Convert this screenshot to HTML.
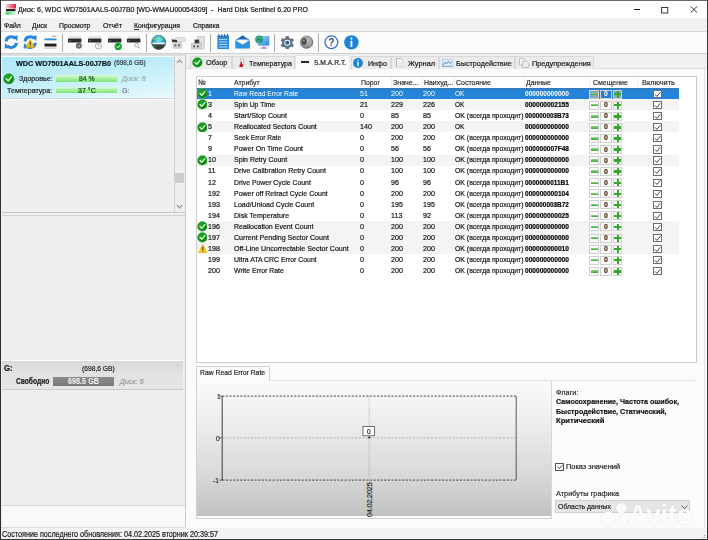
<!DOCTYPE html>
<html><head><meta charset="utf-8"><style>
html,body{margin:0;padding:0;}
body{width:708px;height:540px;overflow:hidden;position:relative;background:#f0f0f0;font-family:"Liberation Sans", sans-serif;}
.a{position:absolute;}
.t{white-space:pre;transform-origin:0 50%;-webkit-text-stroke:0.2px currentColor;}
</style></head><body>
<div class="a" style="left:0px;top:0px;width:708px;height:18.4px;background:#ffffff"></div>
<svg class="a" style="left:5px;top:3px" width="12" height="13" viewBox="0 0 12 13"><defs><linearGradient id="gr" x1="0" x2="1"><stop offset="0" stop-color="#f8d8dc"/><stop offset="1" stop-color="#e0203a"/></linearGradient><linearGradient id="gg" x1="0" x2="1"><stop offset="0" stop-color="#40d060"/><stop offset="1" stop-color="#c8f8d0"/></linearGradient></defs><rect x="0.5" y="1" width="10.5" height="4.5" fill="url(#gr)"/><rect x="1" y="6" width="9.5" height="2.3" fill="#202020"/><rect x="0.5" y="8.6" width="9.5" height="3.2" fill="url(#gg)"/></svg>
<div class="a t" style="left:18.00px;top:6.00px;font-size:8px;line-height:8px;font-weight:400;color:#101010;transform:scaleX(0.8730);">Диск: 6, WDC WD7501AALS-00J7B0 [WD-WMAU00054309]  -  Hard Disk Sentinel 6.20 PRO</div>
<div class="a" style="left:633.7px;top:9.2px;width:6.8px;height:0.9px;background:#1a1a1a"></div>
<svg class="a" style="left:660px;top:5.5px" width="9" height="8" viewBox="0 0 9 8"><rect x="1.6" y="1.4" width="6.2" height="5.6" fill="none" stroke="#1a1a1a" stroke-width="0.85"/></svg>
<svg class="a" style="left:689.5px;top:6.2px" width="8" height="7" viewBox="0 0 8 7"><path d="M0.5 0.3 L7.2 6.7 M7.2 0.3 L0.5 6.7" stroke="#222" stroke-width="0.9"/></svg>
<div class="a" style="left:0px;top:18.4px;width:708px;height:12.4px;background:#f0f0f0"></div>
<div class="a t" style="left:4.00px;top:21.65px;font-size:7.9px;line-height:7.9px;font-weight:400;color:#101010;transform:scaleX(0.8700);">Файл</div>
<div class="a t" style="left:32.00px;top:21.65px;font-size:7.9px;line-height:7.9px;font-weight:400;color:#101010;transform:scaleX(0.8700);">Диск</div>
<div class="a t" style="left:59.00px;top:21.65px;font-size:7.9px;line-height:7.9px;font-weight:400;color:#101010;transform:scaleX(0.8700);">Просмотр</div>
<div class="a t" style="left:102.50px;top:21.65px;font-size:7.9px;line-height:7.9px;font-weight:400;color:#101010;transform:scaleX(0.8700);">Отчёт</div>
<div class="a t" style="left:134.00px;top:21.65px;font-size:7.9px;line-height:7.9px;font-weight:400;color:#101010;transform:scaleX(0.8700);">Конфигурация</div>
<div class="a t" style="left:192.80px;top:21.65px;font-size:7.9px;line-height:7.9px;font-weight:400;color:#101010;transform:scaleX(0.8557);">Справка</div>
<div class="a" style="left:134.3px;top:29.0px;width:5.2px;height:0.7px;background:#303030"></div>
<div class="a" style="left:0px;top:30.7px;width:708px;height:0.9px;background:#d8d8d8"></div>
<div class="a" style="left:0px;top:31.6px;width:708px;height:21.5px;background:#fbfbfb"></div>
<div class="a" style="left:0px;top:53.1px;width:708px;height:1px;background:#cdcdcd"></div>
<div class="a" style="left:61.6px;top:34px;width:0.8px;height:18px;background:#a8a8a8"></div>
<div class="a" style="left:145.8px;top:34px;width:0.8px;height:18px;background:#a8a8a8"></div>
<div class="a" style="left:209.8px;top:34px;width:0.8px;height:18px;background:#a8a8a8"></div>
<div class="a" style="left:273.5px;top:34px;width:0.8px;height:18px;background:#a8a8a8"></div>
<div class="a" style="left:318.3px;top:34px;width:0.8px;height:18px;background:#a8a8a8"></div>
<svg class="a" style="left:4px;top:35.3px" width="14.4" height="14.2" viewBox="0 0 14.4 14.2"><path d="M2.0 6.4 A5.2 5.2 0 0 1 11.0 3.4" fill="none" stroke="#2a86d8" stroke-width="3"/><path d="M8.4 1.2 L13.8 0.6 L13.2 6.2 Z" fill="#2a86d8"/><path d="M12.4 7.8 A5.2 5.2 0 0 1 3.4 10.8" fill="none" stroke="#2a86d8" stroke-width="3"/><path d="M6.0 13.0 L0.6 13.6 L1.2 8.0 Z" fill="#2a86d8"/></svg>
<svg class="a" style="left:23px;top:35.3px" width="14.4" height="14.2" viewBox="0 0 14.4 14.2"><path d="M2.0 6.4 A5.2 5.2 0 0 1 11.0 3.4" fill="none" stroke="#2a86d8" stroke-width="3"/><path d="M8.4 1.2 L13.8 0.6 L13.2 6.2 Z" fill="#2a86d8"/><path d="M12.4 7.8 A5.2 5.2 0 0 1 3.4 10.8" fill="none" stroke="#2a86d8" stroke-width="3"/><path d="M6.0 13.0 L0.6 13.6 L1.2 8.0 Z" fill="#2a86d8"/><path d="M7.2 4.2 L11.6 12.6 L2.8 12.6 Z" fill="#f4c21a" stroke="#d89a00" stroke-width="0.5"/><rect x="6.7" y="6.6" width="1" height="3.3" fill="#303030"/><rect x="6.7" y="10.6" width="1" height="1" fill="#303030"/></svg>
<svg class="a" style="left:43.5px;top:35px" width="13" height="15" viewBox="0 0 13 15"><rect x="8" y="0.8" width="4.5" height="0.8" fill="#909090"/><rect x="0.5" y="3.4" width="12" height="1.9" fill="#3a8fd8"/><rect x="0.5" y="8.6" width="12" height="2.9" fill="#202020"/><rect x="0.5" y="12.6" width="12" height="0.9" fill="#b0b0b0"/></svg>
<svg class="a" style="left:67.9px;top:36px" width="14" height="14" viewBox="0 0 14 14"><rect x="1" y="0.6" width="12" height="0.8" fill="#c8c8c8"/><rect x="0" y="2.6" width="13.4" height="3.9" rx="0.4" fill="#2c2c2c"/><rect x="1" y="4.4" width="2" height="0.8" fill="#888"/><circle cx="10.9" cy="9.8" r="3" fill="#6a6a6a"/><path d="M9.5 9.8 L10.6 10.8 L12.2 8.8" stroke="#ddd" stroke-width="0.8" fill="none"/></svg>
<svg class="a" style="left:87.7px;top:36px" width="14" height="14" viewBox="0 0 14 14"><rect x="1" y="0.6" width="12" height="0.8" fill="#c8c8c8"/><rect x="0" y="2.6" width="13.4" height="3.9" rx="0.4" fill="#2c2c2c"/><rect x="1" y="4.4" width="2" height="0.8" fill="#888"/><circle cx="10.4" cy="10" r="3" fill="#fafafa" stroke="#8a8a8a" stroke-width="0.7"/><path d="M10.4 8.2 V10 H11.6" stroke="#777" stroke-width="0.6" fill="none"/></svg>
<svg class="a" style="left:107.6px;top:36px" width="14" height="14" viewBox="0 0 14 14"><rect x="1" y="0.6" width="12" height="0.8" fill="#c8c8c8"/><rect x="0" y="2.6" width="13.4" height="3.9" rx="0.4" fill="#2c2c2c"/><rect x="1" y="4.4" width="2" height="0.8" fill="#888"/><circle cx="10.2" cy="10.4" r="3.6" fill="#13a026"/><path d="M8.4 10.4 L9.8 11.8 L12 9.2" stroke="#fff" stroke-width="1" fill="none"/></svg>
<svg class="a" style="left:127.3px;top:36px" width="14" height="14" viewBox="0 0 14 14"><rect x="1" y="0.6" width="12" height="0.8" fill="#c8c8c8"/><rect x="0" y="2.6" width="13.4" height="3.9" rx="0.4" fill="#2c2c2c"/><rect x="1" y="4.4" width="2" height="0.8" fill="#888"/><circle cx="9.6" cy="9.2" r="1.8" fill="none" stroke="#999" stroke-width="0.8"/><path d="M10.9 10.6 L12.8 12.6" stroke="#888" stroke-width="1"/></svg>
<svg class="a" style="left:150.5px;top:35px" width="15.5" height="15" viewBox="0 0 15.5 15"><defs><radialGradient id="glb" cx="0.5" cy="0.3" r="0.7"><stop offset="0" stop-color="#a8f0f8"/><stop offset="0.45" stop-color="#30a8d8"/><stop offset="1" stop-color="#1a6a60"/></radialGradient></defs><circle cx="7.7" cy="7.4" r="7.1" fill="url(#glb)" stroke="#2a6a40" stroke-width="0.6"/><path d="M2.6 4.6 Q5 2.4 7 4.4 Q9 6 12 3.6" stroke="#6ad890" stroke-width="1.2" fill="none"/><path d="M1.2 7.6 H14.2 L13.6 9.6 H1.8 Z" fill="#e8f6fc"/><path d="M1.8 9.6 H13.6 Q13 13.6 7.7 14.4 Q2.4 13.6 1.8 9.6 Z" fill="#3a3a3a"/><rect x="3" y="10.8" width="1.6" height="0.8" fill="#6c6"/></svg>
<svg class="a" style="left:171px;top:37px" width="15" height="12" viewBox="0 0 15 12"><path d="M4.5 1.2 Q4.5 0.4 6 0.4 H13.6 Q14.6 0.4 14.6 2.4 Q14.6 4.4 13.6 4.4 H6 Q4.5 4.4 4.5 3.6 Z" fill="#e2e2e2" stroke="#b8b8b8" stroke-width="0.5"/><path d="M0.6 2.2 L6 3 L6.4 5.6 L1 5 Z" fill="#3a3a3a"/><rect x="2" y="5.6" width="8.6" height="5.6" rx="1" fill="#d8d8d8" stroke="#a8a8a8" stroke-width="0.5"/><rect x="3.4" y="7.4" width="2" height="2" fill="#666"/><rect x="7" y="7.4" width="2" height="2" fill="#666"/></svg>
<svg class="a" style="left:191.4px;top:35.5px" width="14" height="14" viewBox="0 0 14 14"><rect x="6.8" y="0.5" width="6.4" height="12.5" fill="#e0e0e0" stroke="#b0b0b0" stroke-width="0.5"/><rect x="3.6" y="3.6" width="4.6" height="4" fill="#3c3c3c"/><rect x="0.5" y="7.6" width="9.6" height="5.4" fill="#d8d8d8" stroke="#a8a8a8" stroke-width="0.5"/><rect x="2" y="9.4" width="2" height="2" fill="#666"/><rect x="5.8" y="9.4" width="2" height="2" fill="#666"/></svg>
<svg class="a" style="left:216.8px;top:34.4px" width="12.5" height="15.4" viewBox="0 0 12.5 15.4"><rect x="0.4" y="1.6" width="11.6" height="13.5" fill="#2b8ad8"/><rect x="1.5" y="0.2" width="1" height="2.6" fill="#1a4a80"/><rect x="4.3" y="0.2" width="1" height="2.6" fill="#1a4a80"/><rect x="7.1" y="0.2" width="1" height="2.6" fill="#1a4a80"/><rect x="9.9" y="0.2" width="1" height="2.6" fill="#1a4a80"/><rect x="2" y="5" width="8.4" height="0.8" fill="#d8ecfa"/><rect x="2" y="7.6" width="8.4" height="0.8" fill="#d8ecfa"/><rect x="2" y="10.2" width="8.4" height="0.8" fill="#d8ecfa"/><rect x="2" y="12.6" width="8.4" height="0.8" fill="#d8ecfa"/></svg>
<svg class="a" style="left:234.8px;top:35.4px" width="15.2" height="13.8" viewBox="0 0 15.2 13.8"><path d="M0.3 5.2 L7.6 0.3 L14.9 5.2 Z" fill="#1a68b8"/><path d="M2.4 4.4 H12.8 L7.6 8.2 Z" fill="#f4faff"/><path d="M0.3 5.2 L7.6 9.6 L14.9 5.2 V13.4 H0.3 Z" fill="#2a90e0"/><path d="M0.3 13.4 L6 8.4 M14.9 13.4 L9.2 8.4" stroke="#58aef0" stroke-width="0.5"/></svg>
<svg class="a" style="left:255.0px;top:35px" width="14.5" height="14" viewBox="0 0 14.5 14"><defs><linearGradient id="scr" x1="0" y1="0" x2="1" y2="1"><stop offset="0" stop-color="#9adcf8"/><stop offset="1" stop-color="#2a8ad8"/></linearGradient></defs><rect x="3.6" y="1.6" width="10.4" height="8.6" fill="url(#scr)" stroke="#4a8ac8" stroke-width="0.5"/><path d="M6.5 13.4 L8.8 10.2 L11 13.4 Z" fill="#b8a0e0"/><rect x="5.5" y="12.6" width="6.5" height="1" fill="#9a88d0"/><circle cx="4.2" cy="4.4" r="4" fill="#2a8aa0"/><path d="M1 3.6 Q2.6 1.2 4.6 2.6 Q6 4.2 7.8 3.2 M1.4 6.2 Q3 7.6 5 6.4" stroke="#40c050" stroke-width="1.4" fill="none"/></svg>
<svg class="a" style="left:279.6px;top:35.6px" width="14.6" height="13.6" viewBox="0 0 14.6 13.6"><g transform="translate(7.3 6.8)"><circle r="5.2" fill="#647282"/><rect x="-1.6" y="-6.8" width="3.2" height="3" fill="#647282" transform="rotate(0)"/><rect x="-1.6" y="-6.8" width="3.2" height="3" fill="#647282" transform="rotate(60)"/><rect x="-1.6" y="-6.8" width="3.2" height="3" fill="#647282" transform="rotate(120)"/><rect x="-1.6" y="-6.8" width="3.2" height="3" fill="#647282" transform="rotate(180)"/><rect x="-1.6" y="-6.8" width="3.2" height="3" fill="#647282" transform="rotate(240)"/><rect x="-1.6" y="-6.8" width="3.2" height="3" fill="#647282" transform="rotate(300)"/><circle r="3.0" fill="#f4f8fc"/><circle r="2.0" fill="#1f62a8"/></g></svg>
<svg class="a" style="left:299.0px;top:35.4px" width="14.5" height="14" viewBox="0 0 14.5 14"><defs><radialGradient id="spk" cx="0.45" cy="0.4" r="0.6"><stop offset="0" stop-color="#d8d8d8"/><stop offset="0.6" stop-color="#9a9a9a"/><stop offset="1" stop-color="#6a6a6a"/></radialGradient></defs><ellipse cx="7.6" cy="7.2" rx="6.6" ry="6.6" fill="url(#spk)"/><ellipse cx="5.2" cy="6.4" rx="2.6" ry="3.4" fill="#4a4a4a"/><ellipse cx="4.8" cy="5.6" rx="1.2" ry="1.4" fill="#8a8a8a"/><path d="M10.8 2.6 Q13.6 7 10.8 11.6" stroke="#bdbdbd" stroke-width="1" fill="none"/></svg>
<svg class="a" style="left:324px;top:35.4px" width="15" height="15" viewBox="0 0 15 15"><circle cx="7.4" cy="7.2" r="6.4" fill="#fff" stroke="#3a6ec0" stroke-width="1.2"/><text x="7.4" y="10.6" font-family="Liberation Sans" font-size="10" font-weight="700" text-anchor="middle" fill="#2a4f90">?</text></svg>
<svg class="a" style="left:344px;top:35.2px" width="15" height="15" viewBox="0 0 15 15"><circle cx="7.4" cy="7.4" r="7.2" fill="#1b82d6"/><rect x="6.5" y="5.8" width="1.8" height="6.2" fill="#fff"/><circle cx="7.4" cy="3.6" r="1.1" fill="#fff"/></svg>
<div class="a" style="left:0px;top:0px;width:708px;height:0.9px;background:#6a6a6a"></div>
<div class="a" style="left:0px;top:0px;width:1.1px;height:540px;background:#2e2e2e"></div>
<div class="a" style="left:706.8px;top:0px;width:1.2px;height:540px;background:#3a3a3a"></div>
<div class="a" style="left:0px;top:538.8px;width:708px;height:1.2px;background:#3a3a3a"></div>
<div class="a" style="left:1.1px;top:54.1px;width:184px;height:2.2px;background:#dedede"></div>
<div class="a" style="left:1.5px;top:56.3px;width:172.1px;height:155.9px;background:#efefef"></div>
<div class="a" style="left:1.5px;top:56.3px;width:172.1px;height:41.8px;background:linear-gradient(172deg,#ade8f8 0%,#bdedf9 40%,#d6f4fb 75%,#eaf9fd 100%);border-top:1px solid #f4fcff;box-sizing:border-box"></div>
<div class="a" style="left:1.5px;top:98.1px;width:172.1px;height:0.9px;background:#d4d8da"></div>
<div class="a" style="left:1.5px;top:99.0px;width:172.1px;height:0.8px;background:#fafafa"></div>
<div class="a t" style="left:15.80px;top:59.80px;font-size:7.6px;line-height:7.6px;font-weight:700;color:#0c1a22;transform:scaleX(0.9539);-webkit-text-stroke:0.22px currentColor;">WDC WD7501AALS-00J7B0</div>
<div class="a t" style="left:113.80px;top:59.40px;font-size:8.0px;line-height:8.0px;font-weight:400;color:#303a40;transform:scaleX(0.8099);">(698,6 GB)</div>
<svg class="a" style="left:3.000000000000001px;top:73.4px" width="11.6" height="11.6" viewBox="0 0 11.6 11.6"><defs><radialGradient id="cg" cx="0.4" cy="0.35" r="0.7"><stop offset="0" stop-color="#22a82a"/><stop offset="1" stop-color="#0a7a14"/></radialGradient></defs><circle cx="5.8" cy="5.8" r="5.3" fill="url(#cg)" stroke="#5cc85c" stroke-width="0.5"/><path d="M3.256 5.906 L5.164 7.92 L8.45 3.892" stroke="#d8ffd0" stroke-width="1.484" fill="none" stroke-linecap="round" stroke-linejoin="round"/></svg>
<div class="a t" style="left:18.60px;top:75.00px;font-size:8.0px;line-height:8.0px;font-weight:400;color:#1a1a1a;transform:scaleX(0.8857);">Здоровье:</div>
<div class="a t" style="left:7.30px;top:87.00px;font-size:8.0px;line-height:8.0px;font-weight:400;color:#1a1a1a;transform:scaleX(0.8937);">Температура:</div>
<div class="a" style="left:56px;top:75.3px;width:60.7px;height:6.3px;background:linear-gradient(180deg,#e2f8de 0%,#b2f2aa 40%,#7ee474 100%)"></div>
<div class="a" style="left:56px;top:86.8px;width:60.7px;height:6.6px;background:linear-gradient(180deg,#e2f8de 0%,#b2f2aa 40%,#7ee474 100%)"></div>
<div class="a t" style="left:79.15px;top:75.00px;font-size:8.0px;line-height:8.0px;font-weight:400;color:#134a13;transform:scaleX(0.8500);">84 %</div>
<div class="a t" style="left:77.70px;top:86.60px;font-size:8.0px;line-height:8.0px;font-weight:400;color:#134a13;transform:scaleX(0.8852);">37 °C</div>
<div class="a t" style="left:121.60px;top:75.20px;font-size:8.0px;line-height:8.0px;font-weight:400;color:#a0a8b0;transform:scaleX(0.8855);font-style:italic;">Диск: 6</div>
<div class="a t" style="left:121.60px;top:87.00px;font-size:8.0px;line-height:8.0px;font-weight:400;color:#707880;transform:scaleX(0.9000);">G:</div>
<div class="a" style="left:173.6px;top:56.3px;width:11.4px;height:155.9px;background:#efefef;border-left:1px solid #d0d0d0;box-sizing:border-box"></div>
<svg class="a" style="left:176px;top:59px" width="7" height="5" viewBox="0 0 7 5"><path d="M0.8 3.8 L3.5 1.2 L6.2 3.8" stroke="#444" stroke-width="0.9" fill="none"/></svg>
<svg class="a" style="left:176px;top:204px" width="7" height="5" viewBox="0 0 7 5"><path d="M0.8 1.2 L3.5 3.8 L6.2 1.2" stroke="#444" stroke-width="0.9" fill="none"/></svg>
<div class="a" style="left:175.3px;top:173px;width:8.4px;height:10.4px;background:#cdcdcd"></div>
<div class="a" style="left:1.5px;top:212px;width:184px;height:1px;background:#c8c8c8"></div>
<div class="a" style="left:1.5px;top:214.5px;width:183.5px;height:290.5px;background:#eeeeee;border-top:1px solid #d2d2d2;box-sizing:border-box"></div>
<div class="a" style="left:1.5px;top:360.3px;width:181.5px;height:1px;background:#fdfdfd"></div>
<div class="a" style="left:1.5px;top:361.3px;width:181px;height:27.8px;background:linear-gradient(180deg,#d9d9d9 0%,#e2e2e2 50%,#e6e6e6 100%)"></div>
<div class="a" style="left:1.5px;top:389.1px;width:181.5px;height:0.8px;background:#c9c9c9"></div>
<div class="a t" style="left:3.50px;top:364.50px;font-size:8.2px;line-height:8.2px;font-weight:700;color:#1a1a1a;transform:scaleX(0.9500);-webkit-text-stroke:0.22px currentColor;">G:</div>
<div class="a t" style="left:81.60px;top:364.70px;font-size:8.0px;line-height:8.0px;font-weight:400;color:#222;transform:scaleX(0.8354);">(698,6 GB)</div>
<div class="a t" style="left:15.50px;top:377.80px;font-size:8.2px;line-height:8.2px;font-weight:700;color:#222;transform:scaleX(0.8110);-webkit-text-stroke:0.22px currentColor;">Свободно</div>
<div class="a" style="left:53px;top:377.1px;width:61.3px;height:8.5px;background:linear-gradient(180deg,#8a8a8a,#7a7a7a)"></div>
<div class="a t" style="left:68.10px;top:377.60px;font-size:8.2px;line-height:8.2px;font-weight:700;color:#f4f4f4;transform:scaleX(0.8845);-webkit-text-stroke:0;">698.5 GB</div>
<div class="a t" style="left:120.20px;top:377.70px;font-size:8.0px;line-height:8.0px;font-weight:400;color:#9a9a9a;transform:scaleX(0.8892);font-style:italic;">Диск: 6</div>
<div class="a" style="left:1.5px;top:504.8px;width:183.5px;height:1px;background:#d8d8d8"></div>
<div class="a" style="left:1.5px;top:505.8px;width:183.5px;height:21.5px;background:#f9f9f9"></div>
<div class="a" style="left:185px;top:54.1px;width:1.2px;height:473.2px;background:#c9c9c9"></div>
<div class="a" style="left:1.1px;top:527.3px;width:705.7px;height:11.5px;background:#f3f3f3;border-top:1px solid #dcdcdc;box-sizing:border-box"></div>
<div class="a t" style="left:2.00px;top:529.75px;font-size:8.3px;line-height:8.3px;font-weight:400;color:#1a1a1a;transform:scaleX(0.8674);">Состояние последнего обновления: 04.02.2025 вторник 20:39:57</div>
<div class="a" style="left:186.2px;top:54.1px;width:520.6px;height:14.4px;background:#f0f0f0"></div>
<div class="a" style="left:186.2px;top:68.5px;width:520.6px;height:459px;background:#fbfbfb"></div>
<div class="a" style="left:186.2px;top:68.4px;width:520.6px;height:0.8px;background:#dcdcdc"></div>
<div class="a" style="left:703.8px;top:68.5px;width:1.5px;height:459px;background:#e4e4e4"></div>
<div class="a" style="left:189.8px;top:56.3px;width:42.0px;height:12.3px;background:#ebebeb;border:1px solid #d9d9d9;border-bottom:none;box-sizing:border-box"></div>
<div class="a" style="left:231.8px;top:56.3px;width:63.5px;height:12.3px;background:#ebebeb;border:1px solid #d9d9d9;border-bottom:none;box-sizing:border-box"></div>
<div class="a" style="left:350.5px;top:56.3px;width:40.39999999999998px;height:12.3px;background:#ebebeb;border:1px solid #d9d9d9;border-bottom:none;box-sizing:border-box"></div>
<div class="a" style="left:390.9px;top:56.3px;width:47.900000000000034px;height:12.3px;background:#ebebeb;border:1px solid #d9d9d9;border-bottom:none;box-sizing:border-box"></div>
<div class="a" style="left:438.8px;top:56.3px;width:76.59999999999997px;height:12.3px;background:#ebebeb;border:1px solid #d9d9d9;border-bottom:none;box-sizing:border-box"></div>
<div class="a" style="left:515.4px;top:56.3px;width:78.60000000000002px;height:12.3px;background:#ebebeb;border:1px solid #d9d9d9;border-bottom:none;box-sizing:border-box"></div>
<div class="a" style="left:295.3px;top:54.6px;width:55.2px;height:14.6px;background:#fbfbfb;border:1px solid #e4e4e4;border-bottom:none;box-sizing:border-box"></div>
<svg class="a" style="left:192.2px;top:57.0px" width="10.8" height="10.8" viewBox="0 0 10.8 10.8"><defs><radialGradient id="cg" cx="0.4" cy="0.35" r="0.7"><stop offset="0" stop-color="#22a82a"/><stop offset="1" stop-color="#0a7a14"/></radialGradient></defs><circle cx="5.4" cy="5.4" r="4.9" fill="url(#cg)" stroke="#5cc85c" stroke-width="0.5"/><path d="M3.0480000000000005 5.498 L4.812 7.36 L7.8500000000000005 3.636" stroke="#d8ffd0" stroke-width="1.3720000000000003" fill="none" stroke-linecap="round" stroke-linejoin="round"/></svg>
<div class="a t" style="left:206.30px;top:59.40px;font-size:8.0px;line-height:8.0px;font-weight:400;color:#1a1a1a;transform:scaleX(0.9260);">Обзор</div>
<svg class="a" style="left:237.5px;top:57.8px" width="7.5" height="9.6" viewBox="0 0 7.5 9.6"><rect x="2.6" y="0.4" width="3.2" height="7" rx="1.4" fill="#f0ece4" stroke="#a89c90" stroke-width="0.6"/><circle cx="3.3" cy="7.6" r="1.9" fill="#c01830"/><rect x="2.6" y="4" width="1.4" height="3.4" fill="#c01830"/></svg>
<div class="a t" style="left:249.20px;top:59.50px;font-size:7.8px;line-height:7.8px;font-weight:400;color:#1a1a1a;transform:scaleX(0.9104);">Температура</div>
<div class="a" style="left:300.9px;top:61.4px;width:8.1px;height:1.6px;background:#2a2a2a"></div>
<div class="a t" style="left:313.90px;top:59.00px;font-size:7.8px;line-height:7.8px;font-weight:400;color:#1a1a1a;transform:scaleX(0.8641);">S.M.A.R.T.</div>
<svg class="a" style="left:353.2px;top:57.5px" width="10" height="10" viewBox="0 0 10 10"><circle cx="5" cy="5" r="4.9" fill="#1b82d6"/><rect x="4.3" y="3.9" width="1.4" height="4.2" fill="#fff"/><circle cx="5" cy="2.5" r="0.8" fill="#fff"/></svg>
<div class="a t" style="left:368.00px;top:59.50px;font-size:7.8px;line-height:7.8px;font-weight:400;color:#1a1a1a;transform:scaleX(0.9143);">Инфо</div>
<svg class="a" style="left:395.5px;top:57.6px" width="7.6" height="9.6" viewBox="0 0 7.6 9.6"><path d="M0.5 0.5 H5 L7.1 2.6 V9.1 H0.5 Z" fill="#fafafa" stroke="#9a9a9a" stroke-width="0.7"/><path d="M2 4 H5.6 M2 5.6 H5.6 M2 7.2 H5.6" stroke="#c8c8c8" stroke-width="0.5"/></svg>
<div class="a t" style="left:407.80px;top:59.50px;font-size:7.8px;line-height:7.8px;font-weight:400;color:#1a1a1a;transform:scaleX(0.9560);">Журнал</div>
<svg class="a" style="left:442.2px;top:58.6px" width="11" height="8" viewBox="0 0 11 8"><rect x="0.3" y="0.3" width="10.4" height="7.4" fill="#e4f0fa" stroke="#8fb4d8" stroke-width="0.5"/><path d="M1 6.5 L3 3 L4.5 5 L6.5 2 L8 4.5 L10 3" stroke="#3a7ec8" stroke-width="0.8" fill="none"/><rect x="0.5" y="6.8" width="10" height="0.8" fill="#6a9ad0"/></svg>
<div class="a t" style="left:456.10px;top:59.50px;font-size:7.8px;line-height:7.8px;font-weight:400;color:#1a1a1a;transform:scaleX(0.9245);">Быстродействие</div>
<svg class="a" style="left:519px;top:57.6px" width="10" height="10" viewBox="0 0 10 10"><path d="M0.5 0.5 H4.5 L6 2 V7 H0.5 Z" fill="#f4f4f4" stroke="#a0a0a0" stroke-width="0.6"/><path d="M3.5 3 H7.5 L9.4 4.9 V9.5 H3.5 Z" fill="#e8eef4" stroke="#98a8b8" stroke-width="0.6"/></svg>
<div class="a t" style="left:532.20px;top:59.50px;font-size:7.8px;line-height:7.8px;font-weight:400;color:#1a1a1a;transform:scaleX(0.9429);">Предупреждения</div>
<div class="a" style="left:195.5px;top:75.9px;width:501px;height:287.4px;background:#ffffff;border:1px solid #cbcbcb;box-sizing:border-box"></div>
<div class="a t" style="left:198.40px;top:79.00px;font-size:8.0px;line-height:8.0px;font-weight:400;color:#2a2a2a;transform:scaleX(0.8600);">№</div>
<div class="a t" style="left:234.40px;top:79.00px;font-size:8.0px;line-height:8.0px;font-weight:400;color:#2a2a2a;transform:scaleX(0.8600);">Атрибут</div>
<div class="a t" style="left:360.80px;top:79.00px;font-size:8.0px;line-height:8.0px;font-weight:400;color:#2a2a2a;transform:scaleX(0.8600);">Порог</div>
<div class="a t" style="left:392.70px;top:79.00px;font-size:8.0px;line-height:8.0px;font-weight:400;color:#2a2a2a;transform:scaleX(0.8920);">Значе...</div>
<div class="a t" style="left:424.00px;top:79.00px;font-size:8.0px;line-height:8.0px;font-weight:400;color:#2a2a2a;transform:scaleX(0.8648);">Наихуд...</div>
<div class="a t" style="left:455.60px;top:79.00px;font-size:8.0px;line-height:8.0px;font-weight:400;color:#2a2a2a;transform:scaleX(0.8742);">Состояние</div>
<div class="a t" style="left:525.80px;top:79.00px;font-size:8.0px;line-height:8.0px;font-weight:400;color:#2a2a2a;transform:scaleX(0.8600);">Данные</div>
<div class="a t" style="left:593.00px;top:79.00px;font-size:8.0px;line-height:8.0px;font-weight:400;color:#2a2a2a;transform:scaleX(0.8697);">Смещение</div>
<div class="a t" style="left:641.80px;top:79.00px;font-size:8.0px;line-height:8.0px;font-weight:400;color:#2a2a2a;transform:scaleX(0.9167);">Включить</div>
<div class="a" style="left:390.8px;top:77px;width:0.8px;height:11px;background:#f1f1f1"></div>
<div class="a" style="left:422.2px;top:77px;width:0.8px;height:11px;background:#f1f1f1"></div>
<div class="a" style="left:453.6px;top:77px;width:0.8px;height:11px;background:#f1f1f1"></div>
<div class="a" style="left:523.6px;top:77px;width:0.8px;height:11px;background:#f1f1f1"></div>
<div class="a" style="left:589.2px;top:77px;width:0.8px;height:11px;background:#f1f1f1"></div>
<div class="a" style="left:637.4px;top:77px;width:0.8px;height:11px;background:#f1f1f1"></div>
<div class="a" style="left:196.5px;top:88.2px;width:482px;height:11px;background:#2684d8;border-top:1px solid #3a78b0;box-sizing:border-box"></div>
<svg class="a" style="left:196.6px;top:88.4px" width="10.8" height="10.8" viewBox="0 0 10.8 10.8"><defs><radialGradient id="cg" cx="0.4" cy="0.35" r="0.7"><stop offset="0" stop-color="#22a82a"/><stop offset="1" stop-color="#0a7a14"/></radialGradient></defs><circle cx="5.4" cy="5.4" r="4.9" fill="url(#cg)" stroke="#5cc85c" stroke-width="0.5"/><path d="M3.0480000000000005 5.498 L4.812 7.36 L7.8500000000000005 3.636" stroke="#d8ffd0" stroke-width="1.3720000000000003" fill="none" stroke-linecap="round" stroke-linejoin="round"/></svg>
<div class="a t" style="left:208.20px;top:89.95px;font-size:8.1px;line-height:8.1px;font-weight:400;color:#ffffff;transform:scaleX(0.8800);-webkit-text-stroke:0;">1</div>
<div class="a t" style="left:233.80px;top:89.95px;font-size:8.1px;line-height:8.1px;font-weight:400;color:#ffffff;transform:scaleX(0.8310);-webkit-text-stroke:0;">Raw Read Error Rate</div>
<div class="a t" style="left:360.30px;top:89.95px;font-size:8.1px;line-height:8.1px;font-weight:400;color:#ffffff;transform:scaleX(0.8800);-webkit-text-stroke:0;">51</div>
<div class="a t" style="left:391.20px;top:89.95px;font-size:8.1px;line-height:8.1px;font-weight:400;color:#ffffff;transform:scaleX(0.8800);-webkit-text-stroke:0;">200</div>
<div class="a t" style="left:422.70px;top:89.95px;font-size:8.1px;line-height:8.1px;font-weight:400;color:#ffffff;transform:scaleX(0.8800);-webkit-text-stroke:0;">200</div>
<div class="a t" style="left:454.60px;top:89.95px;font-size:8.1px;line-height:8.1px;font-weight:400;color:#ffffff;transform:scaleX(0.7947);-webkit-text-stroke:0;">OK</div>
<div class="a t" style="left:525.00px;top:89.95px;font-size:8.1px;line-height:8.1px;font-weight:700;color:#fff;transform:scaleX(0.8125);-webkit-text-stroke:0;">000000000000</div>
<div class="a" style="left:589.4px;top:89.60000000000001px;width:9.6px;height:9.0px;border:1px solid #d0d0d0;box-sizing:border-box;background:#88a8b8"></div>
<div class="a" style="left:590.8px;top:93.0px;width:6.8px;height:2.4px;background:linear-gradient(180deg,#8ee07e,#3aa632)"></div>
<div class="a" style="left:600.0px;top:89.60000000000001px;width:12.0px;height:9.0px;border:1px solid #d0d0d0;box-sizing:border-box;background:#2a80d0"></div>
<div class="a t" style="left:604.07px;top:90.15px;font-size:7.7px;line-height:7.7px;font-weight:700;color:#fff;transform:scaleX(0.9000);-webkit-text-stroke:0;">0</div>
<div class="a" style="left:613.2px;top:89.60000000000001px;width:9.3px;height:9.0px;border:1px solid #d0d0d0;box-sizing:border-box;background:#88a8b8"></div>
<div class="a" style="left:614.4px;top:93.0px;width:6.9px;height:2.4px;background:#34a82a"></div>
<div class="a" style="left:616.65px;top:90.7px;width:2.4px;height:6.9px;background:#34a82a"></div>
<div class="a" style="left:653.2px;top:90.0px;width:8.7px;height:8.2px;border:1px solid #6c6c6c;box-sizing:border-box;background:#fff"></div>
<svg class="a" style="left:654.0px;top:90.8px" width="7.2" height="6.6" viewBox="0 0 7.2 6.6"><path d="M1 3.4 L2.9 5.4 L6.4 1.2" stroke="#383838" stroke-width="0.95" fill="none"/></svg>
<div class="a" style="left:196.5px;top:99.27000000000001px;width:482px;height:11.07px;background:#f4f4f4"></div>
<svg class="a" style="left:196.6px;top:99.47000000000001px" width="10.8" height="10.8" viewBox="0 0 10.8 10.8"><defs><radialGradient id="cg" cx="0.4" cy="0.35" r="0.7"><stop offset="0" stop-color="#22a82a"/><stop offset="1" stop-color="#0a7a14"/></radialGradient></defs><circle cx="5.4" cy="5.4" r="4.9" fill="url(#cg)" stroke="#5cc85c" stroke-width="0.5"/><path d="M3.0480000000000005 5.498 L4.812 7.36 L7.8500000000000005 3.636" stroke="#d8ffd0" stroke-width="1.3720000000000003" fill="none" stroke-linecap="round" stroke-linejoin="round"/></svg>
<div class="a t" style="left:208.20px;top:101.02px;font-size:8.1px;line-height:8.1px;font-weight:400;color:#111111;transform:scaleX(0.8800);">3</div>
<div class="a t" style="left:233.80px;top:101.02px;font-size:8.1px;line-height:8.1px;font-weight:400;color:#111111;transform:scaleX(0.8478);">Spin Up Time</div>
<div class="a t" style="left:360.30px;top:101.02px;font-size:8.1px;line-height:8.1px;font-weight:400;color:#111111;transform:scaleX(0.8800);">21</div>
<div class="a t" style="left:391.20px;top:101.02px;font-size:8.1px;line-height:8.1px;font-weight:400;color:#111111;transform:scaleX(0.8800);">229</div>
<div class="a t" style="left:422.70px;top:101.02px;font-size:8.1px;line-height:8.1px;font-weight:400;color:#111111;transform:scaleX(0.8800);">226</div>
<div class="a t" style="left:454.60px;top:101.02px;font-size:8.1px;line-height:8.1px;font-weight:400;color:#111111;transform:scaleX(0.7947);">OK</div>
<div class="a t" style="left:525.00px;top:101.02px;font-size:8.1px;line-height:8.1px;font-weight:700;color:#000;transform:scaleX(0.8125);-webkit-text-stroke:0.22px currentColor;">000000002155</div>
<div class="a" style="left:589.4px;top:100.67000000000002px;width:9.6px;height:9.0px;border:1px solid #d0d0d0;box-sizing:border-box;background:#fbfbfb"></div>
<div class="a" style="left:590.8px;top:104.07000000000001px;width:6.8px;height:2.4px;background:linear-gradient(180deg,#8ee07e,#3aa632)"></div>
<div class="a" style="left:600.0px;top:100.67000000000002px;width:12.0px;height:9.0px;border:1px solid #d0d0d0;box-sizing:border-box;background:#fbfbfb"></div>
<div class="a t" style="left:604.07px;top:101.22px;font-size:7.7px;line-height:7.7px;font-weight:700;color:#4a2c0c;transform:scaleX(0.9000);-webkit-text-stroke:0.22px currentColor;">0</div>
<div class="a" style="left:613.2px;top:100.67000000000002px;width:9.3px;height:9.0px;border:1px solid #d0d0d0;box-sizing:border-box;background:#fbfbfb"></div>
<div class="a" style="left:614.4px;top:104.07000000000001px;width:6.9px;height:2.4px;background:#34a82a"></div>
<div class="a" style="left:616.65px;top:101.77000000000001px;width:2.4px;height:6.9px;background:#34a82a"></div>
<div class="a" style="left:653.2px;top:101.07000000000001px;width:8.7px;height:8.2px;border:1px solid #6c6c6c;box-sizing:border-box;background:#fff"></div>
<svg class="a" style="left:654.0px;top:101.87px" width="7.2" height="6.6" viewBox="0 0 7.2 6.6"><path d="M1 3.4 L2.9 5.4 L6.4 1.2" stroke="#383838" stroke-width="0.95" fill="none"/></svg>
<div class="a t" style="left:208.20px;top:112.09px;font-size:8.1px;line-height:8.1px;font-weight:400;color:#111111;transform:scaleX(0.8800);">4</div>
<div class="a t" style="left:233.80px;top:112.09px;font-size:8.1px;line-height:8.1px;font-weight:400;color:#111111;transform:scaleX(0.8873);">Start/Stop Count</div>
<div class="a t" style="left:360.30px;top:112.09px;font-size:8.1px;line-height:8.1px;font-weight:400;color:#111111;transform:scaleX(0.8800);">0</div>
<div class="a t" style="left:391.20px;top:112.09px;font-size:8.1px;line-height:8.1px;font-weight:400;color:#111111;transform:scaleX(0.8800);">85</div>
<div class="a t" style="left:422.70px;top:112.09px;font-size:8.1px;line-height:8.1px;font-weight:400;color:#111111;transform:scaleX(0.8800);">85</div>
<div class="a t" style="left:454.60px;top:112.09px;font-size:8.1px;line-height:8.1px;font-weight:400;color:#111111;transform:scaleX(0.8490);">OK (всегда проходит)</div>
<div class="a t" style="left:525.00px;top:112.09px;font-size:8.1px;line-height:8.1px;font-weight:700;color:#000;transform:scaleX(0.7928);-webkit-text-stroke:0.22px currentColor;">000000003B73</div>
<div class="a" style="left:589.4px;top:111.74000000000001px;width:9.6px;height:9.0px;border:1px solid #d0d0d0;box-sizing:border-box;background:#fbfbfb"></div>
<div class="a" style="left:590.8px;top:115.14px;width:6.8px;height:2.4px;background:linear-gradient(180deg,#8ee07e,#3aa632)"></div>
<div class="a" style="left:600.0px;top:111.74000000000001px;width:12.0px;height:9.0px;border:1px solid #d0d0d0;box-sizing:border-box;background:#fbfbfb"></div>
<div class="a t" style="left:604.07px;top:112.29px;font-size:7.7px;line-height:7.7px;font-weight:700;color:#4a2c0c;transform:scaleX(0.9000);-webkit-text-stroke:0.22px currentColor;">0</div>
<div class="a" style="left:613.2px;top:111.74000000000001px;width:9.3px;height:9.0px;border:1px solid #d0d0d0;box-sizing:border-box;background:#fbfbfb"></div>
<div class="a" style="left:614.4px;top:115.14px;width:6.9px;height:2.4px;background:#34a82a"></div>
<div class="a" style="left:616.65px;top:112.84px;width:2.4px;height:6.9px;background:#34a82a"></div>
<div class="a" style="left:653.2px;top:112.14px;width:8.7px;height:8.2px;border:1px solid #6c6c6c;box-sizing:border-box;background:#fff"></div>
<svg class="a" style="left:654.0px;top:112.94px" width="7.2" height="6.6" viewBox="0 0 7.2 6.6"><path d="M1 3.4 L2.9 5.4 L6.4 1.2" stroke="#383838" stroke-width="0.95" fill="none"/></svg>
<div class="a" style="left:196.5px;top:121.41px;width:482px;height:11.07px;background:#f4f4f4"></div>
<svg class="a" style="left:196.6px;top:121.61px" width="10.8" height="10.8" viewBox="0 0 10.8 10.8"><defs><radialGradient id="cg" cx="0.4" cy="0.35" r="0.7"><stop offset="0" stop-color="#22a82a"/><stop offset="1" stop-color="#0a7a14"/></radialGradient></defs><circle cx="5.4" cy="5.4" r="4.9" fill="url(#cg)" stroke="#5cc85c" stroke-width="0.5"/><path d="M3.0480000000000005 5.498 L4.812 7.36 L7.8500000000000005 3.636" stroke="#d8ffd0" stroke-width="1.3720000000000003" fill="none" stroke-linecap="round" stroke-linejoin="round"/></svg>
<div class="a t" style="left:208.20px;top:123.16px;font-size:8.1px;line-height:8.1px;font-weight:400;color:#111111;transform:scaleX(0.8800);">5</div>
<div class="a t" style="left:233.80px;top:123.16px;font-size:8.1px;line-height:8.1px;font-weight:400;color:#111111;transform:scaleX(0.8589);">Reallocated Sectors Count</div>
<div class="a t" style="left:360.30px;top:123.16px;font-size:8.1px;line-height:8.1px;font-weight:400;color:#111111;transform:scaleX(0.8800);">140</div>
<div class="a t" style="left:391.20px;top:123.16px;font-size:8.1px;line-height:8.1px;font-weight:400;color:#111111;transform:scaleX(0.8800);">200</div>
<div class="a t" style="left:422.70px;top:123.16px;font-size:8.1px;line-height:8.1px;font-weight:400;color:#111111;transform:scaleX(0.8800);">200</div>
<div class="a t" style="left:454.60px;top:123.16px;font-size:8.1px;line-height:8.1px;font-weight:400;color:#111111;transform:scaleX(0.7947);">OK</div>
<div class="a t" style="left:525.00px;top:123.16px;font-size:8.1px;line-height:8.1px;font-weight:700;color:#000;transform:scaleX(0.8125);-webkit-text-stroke:0.22px currentColor;">000000000000</div>
<div class="a" style="left:589.4px;top:122.81px;width:9.6px;height:9.0px;border:1px solid #d0d0d0;box-sizing:border-box;background:#fbfbfb"></div>
<div class="a" style="left:590.8px;top:126.21px;width:6.8px;height:2.4px;background:linear-gradient(180deg,#8ee07e,#3aa632)"></div>
<div class="a" style="left:600.0px;top:122.81px;width:12.0px;height:9.0px;border:1px solid #d0d0d0;box-sizing:border-box;background:#fbfbfb"></div>
<div class="a t" style="left:604.07px;top:123.36px;font-size:7.7px;line-height:7.7px;font-weight:700;color:#4a2c0c;transform:scaleX(0.9000);-webkit-text-stroke:0.22px currentColor;">0</div>
<div class="a" style="left:613.2px;top:122.81px;width:9.3px;height:9.0px;border:1px solid #d0d0d0;box-sizing:border-box;background:#fbfbfb"></div>
<div class="a" style="left:614.4px;top:126.21px;width:6.9px;height:2.4px;background:#34a82a"></div>
<div class="a" style="left:616.65px;top:123.91px;width:2.4px;height:6.9px;background:#34a82a"></div>
<div class="a" style="left:653.2px;top:123.21px;width:8.7px;height:8.2px;border:1px solid #6c6c6c;box-sizing:border-box;background:#fff"></div>
<svg class="a" style="left:654.0px;top:124.00999999999999px" width="7.2" height="6.6" viewBox="0 0 7.2 6.6"><path d="M1 3.4 L2.9 5.4 L6.4 1.2" stroke="#383838" stroke-width="0.95" fill="none"/></svg>
<div class="a t" style="left:208.20px;top:134.23px;font-size:8.1px;line-height:8.1px;font-weight:400;color:#111111;transform:scaleX(0.8800);">7</div>
<div class="a t" style="left:233.80px;top:134.23px;font-size:8.1px;line-height:8.1px;font-weight:400;color:#111111;transform:scaleX(0.8116);">Seek Error Rate</div>
<div class="a t" style="left:360.30px;top:134.23px;font-size:8.1px;line-height:8.1px;font-weight:400;color:#111111;transform:scaleX(0.8800);">0</div>
<div class="a t" style="left:391.20px;top:134.23px;font-size:8.1px;line-height:8.1px;font-weight:400;color:#111111;transform:scaleX(0.8800);">200</div>
<div class="a t" style="left:422.70px;top:134.23px;font-size:8.1px;line-height:8.1px;font-weight:400;color:#111111;transform:scaleX(0.8800);">200</div>
<div class="a t" style="left:454.60px;top:134.23px;font-size:8.1px;line-height:8.1px;font-weight:400;color:#111111;transform:scaleX(0.8490);">OK (всегда проходит)</div>
<div class="a t" style="left:525.00px;top:134.23px;font-size:8.1px;line-height:8.1px;font-weight:700;color:#000;transform:scaleX(0.8125);-webkit-text-stroke:0.22px currentColor;">000000000000</div>
<div class="a" style="left:589.4px;top:133.88000000000002px;width:9.6px;height:9.0px;border:1px solid #d0d0d0;box-sizing:border-box;background:#fbfbfb"></div>
<div class="a" style="left:590.8px;top:137.28000000000003px;width:6.8px;height:2.4px;background:linear-gradient(180deg,#8ee07e,#3aa632)"></div>
<div class="a" style="left:600.0px;top:133.88000000000002px;width:12.0px;height:9.0px;border:1px solid #d0d0d0;box-sizing:border-box;background:#fbfbfb"></div>
<div class="a t" style="left:604.07px;top:134.43px;font-size:7.7px;line-height:7.7px;font-weight:700;color:#4a2c0c;transform:scaleX(0.9000);-webkit-text-stroke:0.22px currentColor;">0</div>
<div class="a" style="left:613.2px;top:133.88000000000002px;width:9.3px;height:9.0px;border:1px solid #d0d0d0;box-sizing:border-box;background:#fbfbfb"></div>
<div class="a" style="left:614.4px;top:137.28000000000003px;width:6.9px;height:2.4px;background:#34a82a"></div>
<div class="a" style="left:616.65px;top:134.98000000000002px;width:2.4px;height:6.9px;background:#34a82a"></div>
<div class="a" style="left:653.2px;top:134.28000000000003px;width:8.7px;height:8.2px;border:1px solid #6c6c6c;box-sizing:border-box;background:#fff"></div>
<svg class="a" style="left:654.0px;top:135.08px" width="7.2" height="6.6" viewBox="0 0 7.2 6.6"><path d="M1 3.4 L2.9 5.4 L6.4 1.2" stroke="#383838" stroke-width="0.95" fill="none"/></svg>
<div class="a t" style="left:208.20px;top:145.30px;font-size:8.1px;line-height:8.1px;font-weight:400;color:#111111;transform:scaleX(0.8800);">9</div>
<div class="a t" style="left:233.80px;top:145.30px;font-size:8.1px;line-height:8.1px;font-weight:400;color:#111111;transform:scaleX(0.8666);">Power On Time Count</div>
<div class="a t" style="left:360.30px;top:145.30px;font-size:8.1px;line-height:8.1px;font-weight:400;color:#111111;transform:scaleX(0.8800);">0</div>
<div class="a t" style="left:391.20px;top:145.30px;font-size:8.1px;line-height:8.1px;font-weight:400;color:#111111;transform:scaleX(0.8800);">56</div>
<div class="a t" style="left:422.70px;top:145.30px;font-size:8.1px;line-height:8.1px;font-weight:400;color:#111111;transform:scaleX(0.8800);">56</div>
<div class="a t" style="left:454.60px;top:145.30px;font-size:8.1px;line-height:8.1px;font-weight:400;color:#111111;transform:scaleX(0.8490);">OK (всегда проходит)</div>
<div class="a t" style="left:525.00px;top:145.30px;font-size:8.1px;line-height:8.1px;font-weight:700;color:#000;transform:scaleX(0.8060);-webkit-text-stroke:0.22px currentColor;">000000007F48</div>
<div class="a" style="left:589.4px;top:144.95000000000002px;width:9.6px;height:9.0px;border:1px solid #d0d0d0;box-sizing:border-box;background:#fbfbfb"></div>
<div class="a" style="left:590.8px;top:148.35000000000002px;width:6.8px;height:2.4px;background:linear-gradient(180deg,#8ee07e,#3aa632)"></div>
<div class="a" style="left:600.0px;top:144.95000000000002px;width:12.0px;height:9.0px;border:1px solid #d0d0d0;box-sizing:border-box;background:#fbfbfb"></div>
<div class="a t" style="left:604.07px;top:145.50px;font-size:7.7px;line-height:7.7px;font-weight:700;color:#4a2c0c;transform:scaleX(0.9000);-webkit-text-stroke:0.22px currentColor;">0</div>
<div class="a" style="left:613.2px;top:144.95000000000002px;width:9.3px;height:9.0px;border:1px solid #d0d0d0;box-sizing:border-box;background:#fbfbfb"></div>
<div class="a" style="left:614.4px;top:148.35000000000002px;width:6.9px;height:2.4px;background:#34a82a"></div>
<div class="a" style="left:616.65px;top:146.05px;width:2.4px;height:6.9px;background:#34a82a"></div>
<div class="a" style="left:653.2px;top:145.35000000000002px;width:8.7px;height:8.2px;border:1px solid #6c6c6c;box-sizing:border-box;background:#fff"></div>
<svg class="a" style="left:654.0px;top:146.15px" width="7.2" height="6.6" viewBox="0 0 7.2 6.6"><path d="M1 3.4 L2.9 5.4 L6.4 1.2" stroke="#383838" stroke-width="0.95" fill="none"/></svg>
<div class="a" style="left:196.5px;top:154.62px;width:482px;height:11.07px;background:#f4f4f4"></div>
<svg class="a" style="left:196.6px;top:154.82px" width="10.8" height="10.8" viewBox="0 0 10.8 10.8"><defs><radialGradient id="cg" cx="0.4" cy="0.35" r="0.7"><stop offset="0" stop-color="#22a82a"/><stop offset="1" stop-color="#0a7a14"/></radialGradient></defs><circle cx="5.4" cy="5.4" r="4.9" fill="url(#cg)" stroke="#5cc85c" stroke-width="0.5"/><path d="M3.0480000000000005 5.498 L4.812 7.36 L7.8500000000000005 3.636" stroke="#d8ffd0" stroke-width="1.3720000000000003" fill="none" stroke-linecap="round" stroke-linejoin="round"/></svg>
<div class="a t" style="left:208.20px;top:156.37px;font-size:8.1px;line-height:8.1px;font-weight:400;color:#111111;transform:scaleX(0.8800);">10</div>
<div class="a t" style="left:233.80px;top:156.37px;font-size:8.1px;line-height:8.1px;font-weight:400;color:#111111;transform:scaleX(0.8614);">Spin Retry Count</div>
<div class="a t" style="left:360.30px;top:156.37px;font-size:8.1px;line-height:8.1px;font-weight:400;color:#111111;transform:scaleX(0.8800);">0</div>
<div class="a t" style="left:391.20px;top:156.37px;font-size:8.1px;line-height:8.1px;font-weight:400;color:#111111;transform:scaleX(0.8800);">100</div>
<div class="a t" style="left:422.70px;top:156.37px;font-size:8.1px;line-height:8.1px;font-weight:400;color:#111111;transform:scaleX(0.8800);">100</div>
<div class="a t" style="left:454.60px;top:156.37px;font-size:8.1px;line-height:8.1px;font-weight:400;color:#111111;transform:scaleX(0.8490);">OK (всегда проходит)</div>
<div class="a t" style="left:525.00px;top:156.37px;font-size:8.1px;line-height:8.1px;font-weight:700;color:#000;transform:scaleX(0.8125);-webkit-text-stroke:0.22px currentColor;">000000000000</div>
<div class="a" style="left:589.4px;top:156.02px;width:9.6px;height:9.0px;border:1px solid #d0d0d0;box-sizing:border-box;background:#fbfbfb"></div>
<div class="a" style="left:590.8px;top:159.42000000000002px;width:6.8px;height:2.4px;background:linear-gradient(180deg,#8ee07e,#3aa632)"></div>
<div class="a" style="left:600.0px;top:156.02px;width:12.0px;height:9.0px;border:1px solid #d0d0d0;box-sizing:border-box;background:#fbfbfb"></div>
<div class="a t" style="left:604.07px;top:156.57px;font-size:7.7px;line-height:7.7px;font-weight:700;color:#4a2c0c;transform:scaleX(0.9000);-webkit-text-stroke:0.22px currentColor;">0</div>
<div class="a" style="left:613.2px;top:156.02px;width:9.3px;height:9.0px;border:1px solid #d0d0d0;box-sizing:border-box;background:#fbfbfb"></div>
<div class="a" style="left:614.4px;top:159.42000000000002px;width:6.9px;height:2.4px;background:#34a82a"></div>
<div class="a" style="left:616.65px;top:157.12px;width:2.4px;height:6.9px;background:#34a82a"></div>
<div class="a" style="left:653.2px;top:156.42000000000002px;width:8.7px;height:8.2px;border:1px solid #6c6c6c;box-sizing:border-box;background:#fff"></div>
<svg class="a" style="left:654.0px;top:157.22px" width="7.2" height="6.6" viewBox="0 0 7.2 6.6"><path d="M1 3.4 L2.9 5.4 L6.4 1.2" stroke="#383838" stroke-width="0.95" fill="none"/></svg>
<div class="a t" style="left:208.20px;top:167.44px;font-size:8.1px;line-height:8.1px;font-weight:400;color:#111111;transform:scaleX(0.8800);">11</div>
<div class="a t" style="left:233.80px;top:167.44px;font-size:8.1px;line-height:8.1px;font-weight:400;color:#111111;transform:scaleX(0.8730);">Drive Calibration Retry Count</div>
<div class="a t" style="left:360.30px;top:167.44px;font-size:8.1px;line-height:8.1px;font-weight:400;color:#111111;transform:scaleX(0.8800);">0</div>
<div class="a t" style="left:391.20px;top:167.44px;font-size:8.1px;line-height:8.1px;font-weight:400;color:#111111;transform:scaleX(0.8800);">100</div>
<div class="a t" style="left:422.70px;top:167.44px;font-size:8.1px;line-height:8.1px;font-weight:400;color:#111111;transform:scaleX(0.8800);">100</div>
<div class="a t" style="left:454.60px;top:167.44px;font-size:8.1px;line-height:8.1px;font-weight:400;color:#111111;transform:scaleX(0.8490);">OK (всегда проходит)</div>
<div class="a t" style="left:525.00px;top:167.44px;font-size:8.1px;line-height:8.1px;font-weight:700;color:#000;transform:scaleX(0.8125);-webkit-text-stroke:0.22px currentColor;">000000000000</div>
<div class="a" style="left:589.4px;top:167.09px;width:9.6px;height:9.0px;border:1px solid #d0d0d0;box-sizing:border-box;background:#fbfbfb"></div>
<div class="a" style="left:590.8px;top:170.49px;width:6.8px;height:2.4px;background:linear-gradient(180deg,#8ee07e,#3aa632)"></div>
<div class="a" style="left:600.0px;top:167.09px;width:12.0px;height:9.0px;border:1px solid #d0d0d0;box-sizing:border-box;background:#fbfbfb"></div>
<div class="a t" style="left:604.07px;top:167.64px;font-size:7.7px;line-height:7.7px;font-weight:700;color:#4a2c0c;transform:scaleX(0.9000);-webkit-text-stroke:0.22px currentColor;">0</div>
<div class="a" style="left:613.2px;top:167.09px;width:9.3px;height:9.0px;border:1px solid #d0d0d0;box-sizing:border-box;background:#fbfbfb"></div>
<div class="a" style="left:614.4px;top:170.49px;width:6.9px;height:2.4px;background:#34a82a"></div>
<div class="a" style="left:616.65px;top:168.19px;width:2.4px;height:6.9px;background:#34a82a"></div>
<div class="a" style="left:653.2px;top:167.49px;width:8.7px;height:8.2px;border:1px solid #6c6c6c;box-sizing:border-box;background:#fff"></div>
<svg class="a" style="left:654.0px;top:168.29px" width="7.2" height="6.6" viewBox="0 0 7.2 6.6"><path d="M1 3.4 L2.9 5.4 L6.4 1.2" stroke="#383838" stroke-width="0.95" fill="none"/></svg>
<div class="a t" style="left:208.20px;top:178.51px;font-size:8.1px;line-height:8.1px;font-weight:400;color:#111111;transform:scaleX(0.8800);">12</div>
<div class="a t" style="left:233.80px;top:178.51px;font-size:8.1px;line-height:8.1px;font-weight:400;color:#111111;transform:scaleX(0.8494);">Drive Power Cycle Count</div>
<div class="a t" style="left:360.30px;top:178.51px;font-size:8.1px;line-height:8.1px;font-weight:400;color:#111111;transform:scaleX(0.8800);">0</div>
<div class="a t" style="left:391.20px;top:178.51px;font-size:8.1px;line-height:8.1px;font-weight:400;color:#111111;transform:scaleX(0.8800);">96</div>
<div class="a t" style="left:422.70px;top:178.51px;font-size:8.1px;line-height:8.1px;font-weight:400;color:#111111;transform:scaleX(0.8800);">96</div>
<div class="a t" style="left:454.60px;top:178.51px;font-size:8.1px;line-height:8.1px;font-weight:400;color:#111111;transform:scaleX(0.8490);">OK (всегда проходит)</div>
<div class="a t" style="left:525.00px;top:178.51px;font-size:8.1px;line-height:8.1px;font-weight:700;color:#000;transform:scaleX(0.7993);-webkit-text-stroke:0.22px currentColor;">0000000011B1</div>
<div class="a" style="left:589.4px;top:178.16px;width:9.6px;height:9.0px;border:1px solid #d0d0d0;box-sizing:border-box;background:#fbfbfb"></div>
<div class="a" style="left:590.8px;top:181.56px;width:6.8px;height:2.4px;background:linear-gradient(180deg,#8ee07e,#3aa632)"></div>
<div class="a" style="left:600.0px;top:178.16px;width:12.0px;height:9.0px;border:1px solid #d0d0d0;box-sizing:border-box;background:#fbfbfb"></div>
<div class="a t" style="left:604.07px;top:178.71px;font-size:7.7px;line-height:7.7px;font-weight:700;color:#4a2c0c;transform:scaleX(0.9000);-webkit-text-stroke:0.22px currentColor;">0</div>
<div class="a" style="left:613.2px;top:178.16px;width:9.3px;height:9.0px;border:1px solid #d0d0d0;box-sizing:border-box;background:#fbfbfb"></div>
<div class="a" style="left:614.4px;top:181.56px;width:6.9px;height:2.4px;background:#34a82a"></div>
<div class="a" style="left:616.65px;top:179.26px;width:2.4px;height:6.9px;background:#34a82a"></div>
<div class="a" style="left:653.2px;top:178.56px;width:8.7px;height:8.2px;border:1px solid #6c6c6c;box-sizing:border-box;background:#fff"></div>
<svg class="a" style="left:654.0px;top:179.35999999999999px" width="7.2" height="6.6" viewBox="0 0 7.2 6.6"><path d="M1 3.4 L2.9 5.4 L6.4 1.2" stroke="#383838" stroke-width="0.95" fill="none"/></svg>
<div class="a t" style="left:208.20px;top:189.58px;font-size:8.1px;line-height:8.1px;font-weight:400;color:#111111;transform:scaleX(0.8800);">192</div>
<div class="a t" style="left:233.80px;top:189.58px;font-size:8.1px;line-height:8.1px;font-weight:400;color:#111111;transform:scaleX(0.8628);">Power off Retract Cycle Count</div>
<div class="a t" style="left:360.30px;top:189.58px;font-size:8.1px;line-height:8.1px;font-weight:400;color:#111111;transform:scaleX(0.8800);">0</div>
<div class="a t" style="left:391.20px;top:189.58px;font-size:8.1px;line-height:8.1px;font-weight:400;color:#111111;transform:scaleX(0.8800);">200</div>
<div class="a t" style="left:422.70px;top:189.58px;font-size:8.1px;line-height:8.1px;font-weight:400;color:#111111;transform:scaleX(0.8800);">200</div>
<div class="a t" style="left:454.60px;top:189.58px;font-size:8.1px;line-height:8.1px;font-weight:400;color:#111111;transform:scaleX(0.8490);">OK (всегда проходит)</div>
<div class="a t" style="left:525.00px;top:189.58px;font-size:8.1px;line-height:8.1px;font-weight:700;color:#000;transform:scaleX(0.8125);-webkit-text-stroke:0.22px currentColor;">000000000104</div>
<div class="a" style="left:589.4px;top:189.23px;width:9.6px;height:9.0px;border:1px solid #d0d0d0;box-sizing:border-box;background:#fbfbfb"></div>
<div class="a" style="left:590.8px;top:192.63px;width:6.8px;height:2.4px;background:linear-gradient(180deg,#8ee07e,#3aa632)"></div>
<div class="a" style="left:600.0px;top:189.23px;width:12.0px;height:9.0px;border:1px solid #d0d0d0;box-sizing:border-box;background:#fbfbfb"></div>
<div class="a t" style="left:604.07px;top:189.78px;font-size:7.7px;line-height:7.7px;font-weight:700;color:#4a2c0c;transform:scaleX(0.9000);-webkit-text-stroke:0.22px currentColor;">0</div>
<div class="a" style="left:613.2px;top:189.23px;width:9.3px;height:9.0px;border:1px solid #d0d0d0;box-sizing:border-box;background:#fbfbfb"></div>
<div class="a" style="left:614.4px;top:192.63px;width:6.9px;height:2.4px;background:#34a82a"></div>
<div class="a" style="left:616.65px;top:190.32999999999998px;width:2.4px;height:6.9px;background:#34a82a"></div>
<div class="a" style="left:653.2px;top:189.63px;width:8.7px;height:8.2px;border:1px solid #6c6c6c;box-sizing:border-box;background:#fff"></div>
<svg class="a" style="left:654.0px;top:190.42999999999998px" width="7.2" height="6.6" viewBox="0 0 7.2 6.6"><path d="M1 3.4 L2.9 5.4 L6.4 1.2" stroke="#383838" stroke-width="0.95" fill="none"/></svg>
<div class="a t" style="left:208.20px;top:200.65px;font-size:8.1px;line-height:8.1px;font-weight:400;color:#111111;transform:scaleX(0.8800);">193</div>
<div class="a t" style="left:233.80px;top:200.65px;font-size:8.1px;line-height:8.1px;font-weight:400;color:#111111;transform:scaleX(0.8683);">Load/Unload Cycle Count</div>
<div class="a t" style="left:360.30px;top:200.65px;font-size:8.1px;line-height:8.1px;font-weight:400;color:#111111;transform:scaleX(0.8800);">0</div>
<div class="a t" style="left:391.20px;top:200.65px;font-size:8.1px;line-height:8.1px;font-weight:400;color:#111111;transform:scaleX(0.8800);">195</div>
<div class="a t" style="left:422.70px;top:200.65px;font-size:8.1px;line-height:8.1px;font-weight:400;color:#111111;transform:scaleX(0.8800);">195</div>
<div class="a t" style="left:454.60px;top:200.65px;font-size:8.1px;line-height:8.1px;font-weight:400;color:#111111;transform:scaleX(0.8490);">OK (всегда проходит)</div>
<div class="a t" style="left:525.00px;top:200.65px;font-size:8.1px;line-height:8.1px;font-weight:700;color:#000;transform:scaleX(0.7928);-webkit-text-stroke:0.22px currentColor;">000000003B72</div>
<div class="a" style="left:589.4px;top:200.3px;width:9.6px;height:9.0px;border:1px solid #d0d0d0;box-sizing:border-box;background:#fbfbfb"></div>
<div class="a" style="left:590.8px;top:203.70000000000002px;width:6.8px;height:2.4px;background:linear-gradient(180deg,#8ee07e,#3aa632)"></div>
<div class="a" style="left:600.0px;top:200.3px;width:12.0px;height:9.0px;border:1px solid #d0d0d0;box-sizing:border-box;background:#fbfbfb"></div>
<div class="a t" style="left:604.07px;top:200.85px;font-size:7.7px;line-height:7.7px;font-weight:700;color:#4a2c0c;transform:scaleX(0.9000);-webkit-text-stroke:0.22px currentColor;">0</div>
<div class="a" style="left:613.2px;top:200.3px;width:9.3px;height:9.0px;border:1px solid #d0d0d0;box-sizing:border-box;background:#fbfbfb"></div>
<div class="a" style="left:614.4px;top:203.70000000000002px;width:6.9px;height:2.4px;background:#34a82a"></div>
<div class="a" style="left:616.65px;top:201.4px;width:2.4px;height:6.9px;background:#34a82a"></div>
<div class="a" style="left:653.2px;top:200.70000000000002px;width:8.7px;height:8.2px;border:1px solid #6c6c6c;box-sizing:border-box;background:#fff"></div>
<svg class="a" style="left:654.0px;top:201.5px" width="7.2" height="6.6" viewBox="0 0 7.2 6.6"><path d="M1 3.4 L2.9 5.4 L6.4 1.2" stroke="#383838" stroke-width="0.95" fill="none"/></svg>
<div class="a t" style="left:208.20px;top:211.72px;font-size:8.1px;line-height:8.1px;font-weight:400;color:#111111;transform:scaleX(0.8800);">194</div>
<div class="a t" style="left:233.80px;top:211.72px;font-size:8.1px;line-height:8.1px;font-weight:400;color:#111111;transform:scaleX(0.8707);">Disk Temperature</div>
<div class="a t" style="left:360.30px;top:211.72px;font-size:8.1px;line-height:8.1px;font-weight:400;color:#111111;transform:scaleX(0.8800);">0</div>
<div class="a t" style="left:391.20px;top:211.72px;font-size:8.1px;line-height:8.1px;font-weight:400;color:#111111;transform:scaleX(0.8800);">113</div>
<div class="a t" style="left:422.70px;top:211.72px;font-size:8.1px;line-height:8.1px;font-weight:400;color:#111111;transform:scaleX(0.8800);">92</div>
<div class="a t" style="left:454.60px;top:211.72px;font-size:8.1px;line-height:8.1px;font-weight:400;color:#111111;transform:scaleX(0.8490);">OK (всегда проходит)</div>
<div class="a t" style="left:525.00px;top:211.72px;font-size:8.1px;line-height:8.1px;font-weight:700;color:#000;transform:scaleX(0.8125);-webkit-text-stroke:0.22px currentColor;">000000000025</div>
<div class="a" style="left:589.4px;top:211.37000000000003px;width:9.6px;height:9.0px;border:1px solid #d0d0d0;box-sizing:border-box;background:#fbfbfb"></div>
<div class="a" style="left:590.8px;top:214.77000000000004px;width:6.8px;height:2.4px;background:linear-gradient(180deg,#8ee07e,#3aa632)"></div>
<div class="a" style="left:600.0px;top:211.37000000000003px;width:12.0px;height:9.0px;border:1px solid #d0d0d0;box-sizing:border-box;background:#fbfbfb"></div>
<div class="a t" style="left:604.07px;top:211.92px;font-size:7.7px;line-height:7.7px;font-weight:700;color:#4a2c0c;transform:scaleX(0.9000);-webkit-text-stroke:0.22px currentColor;">0</div>
<div class="a" style="left:613.2px;top:211.37000000000003px;width:9.3px;height:9.0px;border:1px solid #d0d0d0;box-sizing:border-box;background:#fbfbfb"></div>
<div class="a" style="left:614.4px;top:214.77000000000004px;width:6.9px;height:2.4px;background:#34a82a"></div>
<div class="a" style="left:616.65px;top:212.47000000000003px;width:2.4px;height:6.9px;background:#34a82a"></div>
<div class="a" style="left:653.2px;top:211.77000000000004px;width:8.7px;height:8.2px;border:1px solid #6c6c6c;box-sizing:border-box;background:#fff"></div>
<svg class="a" style="left:654.0px;top:212.57000000000002px" width="7.2" height="6.6" viewBox="0 0 7.2 6.6"><path d="M1 3.4 L2.9 5.4 L6.4 1.2" stroke="#383838" stroke-width="0.95" fill="none"/></svg>
<div class="a" style="left:196.5px;top:221.04000000000002px;width:482px;height:11.07px;background:#f4f4f4"></div>
<svg class="a" style="left:196.6px;top:221.24px" width="10.8" height="10.8" viewBox="0 0 10.8 10.8"><defs><radialGradient id="cg" cx="0.4" cy="0.35" r="0.7"><stop offset="0" stop-color="#22a82a"/><stop offset="1" stop-color="#0a7a14"/></radialGradient></defs><circle cx="5.4" cy="5.4" r="4.9" fill="url(#cg)" stroke="#5cc85c" stroke-width="0.5"/><path d="M3.0480000000000005 5.498 L4.812 7.36 L7.8500000000000005 3.636" stroke="#d8ffd0" stroke-width="1.3720000000000003" fill="none" stroke-linecap="round" stroke-linejoin="round"/></svg>
<div class="a t" style="left:208.20px;top:222.79px;font-size:8.1px;line-height:8.1px;font-weight:400;color:#111111;transform:scaleX(0.8800);">196</div>
<div class="a t" style="left:233.80px;top:222.79px;font-size:8.1px;line-height:8.1px;font-weight:400;color:#111111;transform:scaleX(0.8703);">Reallocation Event Count</div>
<div class="a t" style="left:360.30px;top:222.79px;font-size:8.1px;line-height:8.1px;font-weight:400;color:#111111;transform:scaleX(0.8800);">0</div>
<div class="a t" style="left:391.20px;top:222.79px;font-size:8.1px;line-height:8.1px;font-weight:400;color:#111111;transform:scaleX(0.8800);">200</div>
<div class="a t" style="left:422.70px;top:222.79px;font-size:8.1px;line-height:8.1px;font-weight:400;color:#111111;transform:scaleX(0.8800);">200</div>
<div class="a t" style="left:454.60px;top:222.79px;font-size:8.1px;line-height:8.1px;font-weight:400;color:#111111;transform:scaleX(0.8490);">OK (всегда проходит)</div>
<div class="a t" style="left:525.00px;top:222.79px;font-size:8.1px;line-height:8.1px;font-weight:700;color:#000;transform:scaleX(0.8125);-webkit-text-stroke:0.22px currentColor;">000000000000</div>
<div class="a" style="left:589.4px;top:222.44000000000003px;width:9.6px;height:9.0px;border:1px solid #d0d0d0;box-sizing:border-box;background:#fbfbfb"></div>
<div class="a" style="left:590.8px;top:225.84000000000003px;width:6.8px;height:2.4px;background:linear-gradient(180deg,#8ee07e,#3aa632)"></div>
<div class="a" style="left:600.0px;top:222.44000000000003px;width:12.0px;height:9.0px;border:1px solid #d0d0d0;box-sizing:border-box;background:#fbfbfb"></div>
<div class="a t" style="left:604.07px;top:222.99px;font-size:7.7px;line-height:7.7px;font-weight:700;color:#4a2c0c;transform:scaleX(0.9000);-webkit-text-stroke:0.22px currentColor;">0</div>
<div class="a" style="left:613.2px;top:222.44000000000003px;width:9.3px;height:9.0px;border:1px solid #d0d0d0;box-sizing:border-box;background:#fbfbfb"></div>
<div class="a" style="left:614.4px;top:225.84000000000003px;width:6.9px;height:2.4px;background:#34a82a"></div>
<div class="a" style="left:616.65px;top:223.54000000000002px;width:2.4px;height:6.9px;background:#34a82a"></div>
<div class="a" style="left:653.2px;top:222.84000000000003px;width:8.7px;height:8.2px;border:1px solid #6c6c6c;box-sizing:border-box;background:#fff"></div>
<svg class="a" style="left:654.0px;top:223.64000000000001px" width="7.2" height="6.6" viewBox="0 0 7.2 6.6"><path d="M1 3.4 L2.9 5.4 L6.4 1.2" stroke="#383838" stroke-width="0.95" fill="none"/></svg>
<div class="a" style="left:196.5px;top:232.11px;width:482px;height:11.07px;background:#f4f4f4"></div>
<svg class="a" style="left:196.6px;top:232.31px" width="10.8" height="10.8" viewBox="0 0 10.8 10.8"><defs><radialGradient id="cg" cx="0.4" cy="0.35" r="0.7"><stop offset="0" stop-color="#22a82a"/><stop offset="1" stop-color="#0a7a14"/></radialGradient></defs><circle cx="5.4" cy="5.4" r="4.9" fill="url(#cg)" stroke="#5cc85c" stroke-width="0.5"/><path d="M3.0480000000000005 5.498 L4.812 7.36 L7.8500000000000005 3.636" stroke="#d8ffd0" stroke-width="1.3720000000000003" fill="none" stroke-linecap="round" stroke-linejoin="round"/></svg>
<div class="a t" style="left:208.20px;top:233.86px;font-size:8.1px;line-height:8.1px;font-weight:400;color:#111111;transform:scaleX(0.8800);">197</div>
<div class="a t" style="left:233.80px;top:233.86px;font-size:8.1px;line-height:8.1px;font-weight:400;color:#111111;transform:scaleX(0.8752);">Current Pending Sector Count</div>
<div class="a t" style="left:360.30px;top:233.86px;font-size:8.1px;line-height:8.1px;font-weight:400;color:#111111;transform:scaleX(0.8800);">0</div>
<div class="a t" style="left:391.20px;top:233.86px;font-size:8.1px;line-height:8.1px;font-weight:400;color:#111111;transform:scaleX(0.8800);">200</div>
<div class="a t" style="left:422.70px;top:233.86px;font-size:8.1px;line-height:8.1px;font-weight:400;color:#111111;transform:scaleX(0.8800);">200</div>
<div class="a t" style="left:454.60px;top:233.86px;font-size:8.1px;line-height:8.1px;font-weight:400;color:#111111;transform:scaleX(0.8490);">OK (всегда проходит)</div>
<div class="a t" style="left:525.00px;top:233.86px;font-size:8.1px;line-height:8.1px;font-weight:700;color:#000;transform:scaleX(0.8125);-webkit-text-stroke:0.22px currentColor;">000000000000</div>
<div class="a" style="left:589.4px;top:233.51000000000002px;width:9.6px;height:9.0px;border:1px solid #d0d0d0;box-sizing:border-box;background:#fbfbfb"></div>
<div class="a" style="left:590.8px;top:236.91000000000003px;width:6.8px;height:2.4px;background:linear-gradient(180deg,#8ee07e,#3aa632)"></div>
<div class="a" style="left:600.0px;top:233.51000000000002px;width:12.0px;height:9.0px;border:1px solid #d0d0d0;box-sizing:border-box;background:#fbfbfb"></div>
<div class="a t" style="left:604.07px;top:234.06px;font-size:7.7px;line-height:7.7px;font-weight:700;color:#4a2c0c;transform:scaleX(0.9000);-webkit-text-stroke:0.22px currentColor;">0</div>
<div class="a" style="left:613.2px;top:233.51000000000002px;width:9.3px;height:9.0px;border:1px solid #d0d0d0;box-sizing:border-box;background:#fbfbfb"></div>
<div class="a" style="left:614.4px;top:236.91000000000003px;width:6.9px;height:2.4px;background:#34a82a"></div>
<div class="a" style="left:616.65px;top:234.61px;width:2.4px;height:6.9px;background:#34a82a"></div>
<div class="a" style="left:653.2px;top:233.91000000000003px;width:8.7px;height:8.2px;border:1px solid #6c6c6c;box-sizing:border-box;background:#fff"></div>
<svg class="a" style="left:654.0px;top:234.71px" width="7.2" height="6.6" viewBox="0 0 7.2 6.6"><path d="M1 3.4 L2.9 5.4 L6.4 1.2" stroke="#383838" stroke-width="0.95" fill="none"/></svg>
<div class="a" style="left:196.5px;top:243.18px;width:482px;height:11.07px;background:#f4f4f4"></div>
<svg class="a" style="left:197.6px;top:243.98000000000002px" width="9.6" height="9" viewBox="0 0 9.6 9"><path d="M4.8 0.5 L9.2 8.5 H0.4 Z" fill="#f6cc10" stroke="#e0a800" stroke-width="0.5"/><rect x="4.3" y="2.8" width="1" height="3.4" fill="#3a3020"/><rect x="4.3" y="6.8" width="1" height="1" fill="#3a3020"/></svg>
<div class="a t" style="left:208.20px;top:244.93px;font-size:8.1px;line-height:8.1px;font-weight:400;color:#111111;transform:scaleX(0.8800);">198</div>
<div class="a t" style="left:233.80px;top:244.93px;font-size:8.1px;line-height:8.1px;font-weight:400;color:#111111;transform:scaleX(0.8771);">Off-Line Uncorrectable Sector Count</div>
<div class="a t" style="left:360.30px;top:244.93px;font-size:8.1px;line-height:8.1px;font-weight:400;color:#111111;transform:scaleX(0.8800);">0</div>
<div class="a t" style="left:391.20px;top:244.93px;font-size:8.1px;line-height:8.1px;font-weight:400;color:#111111;transform:scaleX(0.8800);">200</div>
<div class="a t" style="left:422.70px;top:244.93px;font-size:8.1px;line-height:8.1px;font-weight:400;color:#111111;transform:scaleX(0.8800);">200</div>
<div class="a t" style="left:454.60px;top:244.93px;font-size:8.1px;line-height:8.1px;font-weight:400;color:#111111;transform:scaleX(0.8490);">OK (всегда проходит)</div>
<div class="a t" style="left:525.00px;top:244.93px;font-size:8.1px;line-height:8.1px;font-weight:700;color:#000;transform:scaleX(0.8125);-webkit-text-stroke:0.22px currentColor;">000000000010</div>
<div class="a" style="left:589.4px;top:244.58px;width:9.6px;height:9.0px;border:1px solid #d0d0d0;box-sizing:border-box;background:#fbfbfb"></div>
<div class="a" style="left:590.8px;top:247.98000000000002px;width:6.8px;height:2.4px;background:linear-gradient(180deg,#8ee07e,#3aa632)"></div>
<div class="a" style="left:600.0px;top:244.58px;width:12.0px;height:9.0px;border:1px solid #d0d0d0;box-sizing:border-box;background:#fbfbfb"></div>
<div class="a t" style="left:604.07px;top:245.13px;font-size:7.7px;line-height:7.7px;font-weight:700;color:#4a2c0c;transform:scaleX(0.9000);-webkit-text-stroke:0.22px currentColor;">0</div>
<div class="a" style="left:613.2px;top:244.58px;width:9.3px;height:9.0px;border:1px solid #d0d0d0;box-sizing:border-box;background:#fbfbfb"></div>
<div class="a" style="left:614.4px;top:247.98000000000002px;width:6.9px;height:2.4px;background:#34a82a"></div>
<div class="a" style="left:616.65px;top:245.68px;width:2.4px;height:6.9px;background:#34a82a"></div>
<div class="a" style="left:653.2px;top:244.98000000000002px;width:8.7px;height:8.2px;border:1px solid #6c6c6c;box-sizing:border-box;background:#fff"></div>
<svg class="a" style="left:654.0px;top:245.78px" width="7.2" height="6.6" viewBox="0 0 7.2 6.6"><path d="M1 3.4 L2.9 5.4 L6.4 1.2" stroke="#383838" stroke-width="0.95" fill="none"/></svg>
<div class="a t" style="left:208.20px;top:256.00px;font-size:8.1px;line-height:8.1px;font-weight:400;color:#111111;transform:scaleX(0.8800);">199</div>
<div class="a t" style="left:233.80px;top:256.00px;font-size:8.1px;line-height:8.1px;font-weight:400;color:#111111;transform:scaleX(0.8538);">Ultra ATA CRC Error Count</div>
<div class="a t" style="left:360.30px;top:256.00px;font-size:8.1px;line-height:8.1px;font-weight:400;color:#111111;transform:scaleX(0.8800);">0</div>
<div class="a t" style="left:391.20px;top:256.00px;font-size:8.1px;line-height:8.1px;font-weight:400;color:#111111;transform:scaleX(0.8800);">200</div>
<div class="a t" style="left:422.70px;top:256.00px;font-size:8.1px;line-height:8.1px;font-weight:400;color:#111111;transform:scaleX(0.8800);">200</div>
<div class="a t" style="left:454.60px;top:256.00px;font-size:8.1px;line-height:8.1px;font-weight:400;color:#111111;transform:scaleX(0.8490);">OK (всегда проходит)</div>
<div class="a t" style="left:525.00px;top:256.00px;font-size:8.1px;line-height:8.1px;font-weight:700;color:#000;transform:scaleX(0.8125);-webkit-text-stroke:0.22px currentColor;">000000000000</div>
<div class="a" style="left:589.4px;top:255.65px;width:9.6px;height:9.0px;border:1px solid #d0d0d0;box-sizing:border-box;background:#fbfbfb"></div>
<div class="a" style="left:590.8px;top:259.05px;width:6.8px;height:2.4px;background:linear-gradient(180deg,#8ee07e,#3aa632)"></div>
<div class="a" style="left:600.0px;top:255.65px;width:12.0px;height:9.0px;border:1px solid #d0d0d0;box-sizing:border-box;background:#fbfbfb"></div>
<div class="a t" style="left:604.07px;top:256.20px;font-size:7.7px;line-height:7.7px;font-weight:700;color:#4a2c0c;transform:scaleX(0.9000);-webkit-text-stroke:0.22px currentColor;">0</div>
<div class="a" style="left:613.2px;top:255.65px;width:9.3px;height:9.0px;border:1px solid #d0d0d0;box-sizing:border-box;background:#fbfbfb"></div>
<div class="a" style="left:614.4px;top:259.05px;width:6.9px;height:2.4px;background:#34a82a"></div>
<div class="a" style="left:616.65px;top:256.75px;width:2.4px;height:6.9px;background:#34a82a"></div>
<div class="a" style="left:653.2px;top:256.05px;width:8.7px;height:8.2px;border:1px solid #6c6c6c;box-sizing:border-box;background:#fff"></div>
<svg class="a" style="left:654.0px;top:256.85px" width="7.2" height="6.6" viewBox="0 0 7.2 6.6"><path d="M1 3.4 L2.9 5.4 L6.4 1.2" stroke="#383838" stroke-width="0.95" fill="none"/></svg>
<div class="a t" style="left:208.20px;top:267.07px;font-size:8.1px;line-height:8.1px;font-weight:400;color:#111111;transform:scaleX(0.8800);">200</div>
<div class="a t" style="left:233.80px;top:267.07px;font-size:8.1px;line-height:8.1px;font-weight:400;color:#111111;transform:scaleX(0.8555);">Write Error Rate</div>
<div class="a t" style="left:360.30px;top:267.07px;font-size:8.1px;line-height:8.1px;font-weight:400;color:#111111;transform:scaleX(0.8800);">0</div>
<div class="a t" style="left:391.20px;top:267.07px;font-size:8.1px;line-height:8.1px;font-weight:400;color:#111111;transform:scaleX(0.8800);">200</div>
<div class="a t" style="left:422.70px;top:267.07px;font-size:8.1px;line-height:8.1px;font-weight:400;color:#111111;transform:scaleX(0.8800);">200</div>
<div class="a t" style="left:454.60px;top:267.07px;font-size:8.1px;line-height:8.1px;font-weight:400;color:#111111;transform:scaleX(0.8490);">OK (всегда проходит)</div>
<div class="a t" style="left:525.00px;top:267.07px;font-size:8.1px;line-height:8.1px;font-weight:700;color:#000;transform:scaleX(0.8125);-webkit-text-stroke:0.22px currentColor;">000000000000</div>
<div class="a" style="left:589.4px;top:266.71999999999997px;width:9.6px;height:9.0px;border:1px solid #d0d0d0;box-sizing:border-box;background:#fbfbfb"></div>
<div class="a" style="left:590.8px;top:270.12px;width:6.8px;height:2.4px;background:linear-gradient(180deg,#8ee07e,#3aa632)"></div>
<div class="a" style="left:600.0px;top:266.71999999999997px;width:12.0px;height:9.0px;border:1px solid #d0d0d0;box-sizing:border-box;background:#fbfbfb"></div>
<div class="a t" style="left:604.07px;top:267.27px;font-size:7.7px;line-height:7.7px;font-weight:700;color:#4a2c0c;transform:scaleX(0.9000);-webkit-text-stroke:0.22px currentColor;">0</div>
<div class="a" style="left:613.2px;top:266.71999999999997px;width:9.3px;height:9.0px;border:1px solid #d0d0d0;box-sizing:border-box;background:#fbfbfb"></div>
<div class="a" style="left:614.4px;top:270.12px;width:6.9px;height:2.4px;background:#34a82a"></div>
<div class="a" style="left:616.65px;top:267.82px;width:2.4px;height:6.9px;background:#34a82a"></div>
<div class="a" style="left:653.2px;top:267.12px;width:8.7px;height:8.2px;border:1px solid #6c6c6c;box-sizing:border-box;background:#fff"></div>
<svg class="a" style="left:654.0px;top:267.92px" width="7.2" height="6.6" viewBox="0 0 7.2 6.6"><path d="M1 3.4 L2.9 5.4 L6.4 1.2" stroke="#383838" stroke-width="0.95" fill="none"/></svg>
<div class="a" style="left:195.5px;top:366.3px;width:74px;height:14.5px;background:#fbfbfb;border:1px solid #d2d2d2;border-bottom:none;box-sizing:border-box"></div>
<div class="a t" style="left:199.80px;top:369.35px;font-size:7.7px;line-height:7.7px;font-weight:400;color:#1e1e1e;transform:scaleX(0.8857);">Raw Read Error Rate</div>
<div class="a" style="left:269.5px;top:380.2px;width:426px;height:0.9px;background:#e2e2e2"></div>
<div class="a" style="left:195.5px;top:380.3px;width:500.3px;height:138.8px;border:1px solid #d2d2d2;border-top:none;box-sizing:border-box"></div>
<div class="a" style="left:197.4px;top:381.2px;width:353.4px;height:135.2px;background:linear-gradient(180deg,#fafafa 0%,#eeeeee 30%,#d8d8d8 70%,#c2c2c2 100%)"></div>
<svg class="a" style="left:197.4px;top:381.2px" width="354" height="136" viewBox="197.4 381.2 354 136"><path d="M222.6 396.3 V480.3" stroke="#3a3a3a" stroke-width="1"/><path d="M516.6 396.3 V480.3" stroke="#4a4a4a" stroke-width="0.9"/><path d="M222.6 396.3 H516.6" stroke="#3a3a3a" stroke-width="0.9" stroke-dasharray="2.2 1.4"/><path d="M222.6 480.3 H516.6" stroke="#3a3a3a" stroke-width="0.9" stroke-dasharray="2.2 1.4"/><path d="M222.6 438.1 H516.6" stroke="#9a9a9a" stroke-width="0.7" stroke-dasharray="2 1.6"/><path d="M369.6 396.3 V516" stroke="#9a9a9a" stroke-width="0.7" stroke-dasharray="1.2 1.2"/><path d="M219.6 396.3 H222.6 M219.6 438.1 H222.6 M219.6 480.3 H222.6" stroke="#3a3a3a" stroke-width="0.8"/><rect x="363.4" y="426.7" width="11.4" height="9.3" fill="#fff" stroke="#3a3a3a" stroke-width="0.7"/><circle cx="369.6" cy="437.8" r="1" fill="#111"/></svg>
<div class="a t" style="left:216.60px;top:392.60px;font-size:7.4px;line-height:7.4px;font-weight:400;color:#303030;transform:scaleX(0.9000);">1</div>
<div class="a t" style="left:216.20px;top:434.50px;font-size:7.4px;line-height:7.4px;font-weight:400;color:#303030;transform:scaleX(0.9000);">0</div>
<div class="a t" style="left:213.00px;top:476.70px;font-size:7.4px;line-height:7.4px;font-weight:400;color:#303030;transform:scaleX(0.9000);">-1</div>
<div class="a t" style="left:367.30px;top:427.80px;font-size:7.2px;line-height:7.2px;font-weight:400;color:#202020;transform:scaleX(0.9000);">0</div>
<div class="a t" style="left:369.6px;top:500px;width:0;height:0"><div style="position:absolute;left:-17px;top:-4px;width:34px;height:8px;transform:rotate(-90deg);font-size:7.4px;line-height:8px;text-align:center;color:#303030;white-space:pre;letter-spacing:-0.25px">04.02.2025</div></div>
<div class="a" style="left:550.8px;top:380.8px;width:145px;height:138.2px;background:#fcfcfc;border-left:1px solid #d8d8d8;box-sizing:border-box"></div>
<div class="a t" style="left:556.00px;top:388.50px;font-size:7.6px;line-height:7.6px;font-weight:400;color:#2a2a2a;transform:scaleX(0.9658);">Флаги:</div>
<div class="a t" style="left:556.00px;top:398.30px;font-size:7.8px;line-height:7.8px;font-weight:700;color:#141414;transform:scaleX(0.9151);-webkit-text-stroke:0.22px currentColor;">Самосохранение, Частота ошибок,</div>
<div class="a t" style="left:556.00px;top:407.50px;font-size:7.8px;line-height:7.8px;font-weight:700;color:#141414;transform:scaleX(0.9104);-webkit-text-stroke:0.22px currentColor;">Быстродействие, Статический,</div>
<div class="a t" style="left:556.00px;top:416.70px;font-size:7.8px;line-height:7.8px;font-weight:700;color:#141414;transform:scaleX(0.9775);-webkit-text-stroke:0.22px currentColor;">Критический</div>
<div class="a" style="left:555.4px;top:462.7px;width:8.6px;height:8.6px;border:1px solid #555;box-sizing:border-box;background:#fff"></div>
<svg class="a" style="left:556.6px;top:464.2px" width="6.4" height="5.4" viewBox="0 0 6.4 5.4"><path d="M0.6 2.6 L2.4 4.5 L5.8 0.6" stroke="#333" stroke-width="0.9" fill="none"/></svg>
<div class="a t" style="left:565.70px;top:462.75px;font-size:7.7px;line-height:7.7px;font-weight:400;color:#222;transform:scaleX(0.9628);">Показ значений</div>
<div class="a t" style="left:556.00px;top:490.35px;font-size:7.7px;line-height:7.7px;font-weight:400;color:#2a2a2a;transform:scaleX(0.9547);">Атрибуты графика</div>
<div class="a" style="left:555.4px;top:499.5px;width:134.2px;height:13.8px;background:#e6e6e6;border:1px solid #d0d0d0;box-sizing:border-box"></div>
<div class="a t" style="left:558.40px;top:502.55px;font-size:7.7px;line-height:7.7px;font-weight:400;color:#1e1e1e;transform:scaleX(0.9000);">Область данных</div>
<svg class="a" style="left:680.5px;top:504.5px" width="7" height="4.5" viewBox="0 0 7 4.5"><path d="M0.6 0.6 L3.5 3.6 L6.4 0.6" stroke="#444" stroke-width="0.9" fill="none"/></svg>
<div class="a" style="left:703.5px;top:536.5px;width:1px;height:1px;background:#a0a0a0"></div>
<div class="a" style="left:701.5px;top:536.5px;width:1px;height:1px;background:#a0a0a0"></div>
<div class="a" style="left:703.5px;top:534.5px;width:1px;height:1px;background:#a0a0a0"></div>
<svg class="a" style="left:596px;top:494px" width="110" height="42" viewBox="596 494 110 42"><defs><filter id="sh" x="-20%" y="-20%" width="140%" height="140%"><feGaussianBlur in="SourceAlpha" stdDeviation="1"/><feColorMatrix values="0 0 0 0 0.4  0 0 0 0 0.4  0 0 0 0 0.4  0 0 0 0.35 0"/><feMerge><feMergeNode/><feMergeNode in="SourceGraphic"/></feMerge></filter></defs><g fill="#ffffff" fill-opacity="0.86" filter="url(#sh)"><circle cx="608.2" cy="518.3" r="6.8"/><circle cx="621.4" cy="508.2" r="5.3"/><circle cx="623.7" cy="519.8" r="3.8"/><text x="628.4" y="524.5" font-family="Liberation Sans" font-size="27" font-weight="700" transform="translate(628.4 0) scale(0.97 1) translate(-628.4 0)">Avito</text></g></svg>
</body></html>
